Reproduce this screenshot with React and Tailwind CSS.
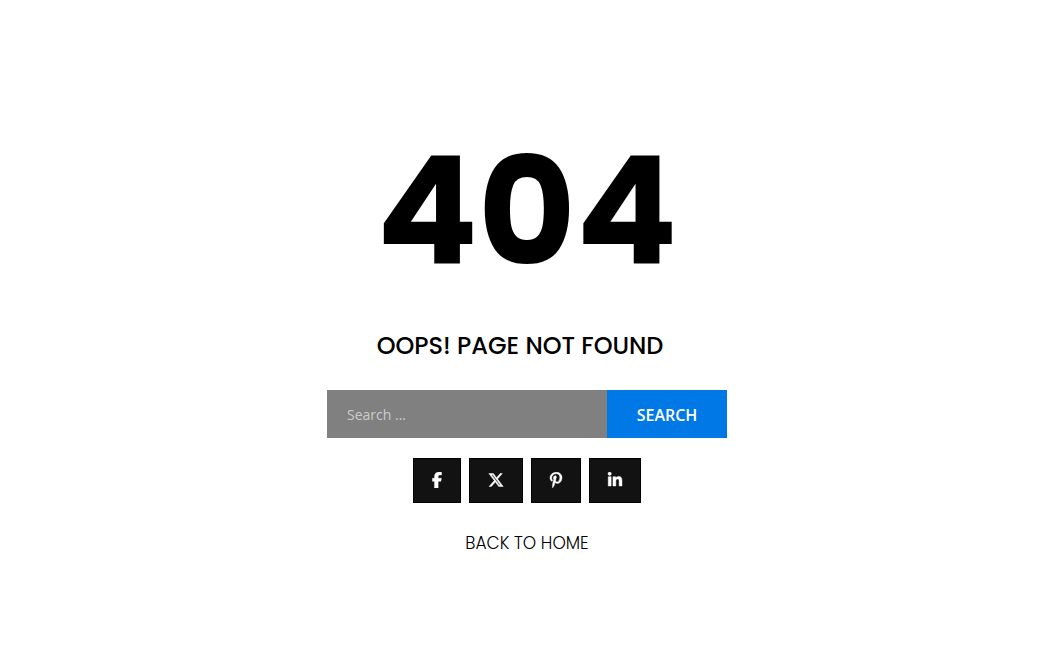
import React from 'react'
import { FaFacebookF, FaXTwitter, FaPinterestP, FaLinkedinIn } from 'react-icons/fa6'

const socials = [
    { label: 'Facebook', Icon: FaFacebookF, width: 'w-[48px]' },
    { label: 'X', Icon: FaXTwitter, width: 'w-[54px]' },
    { label: 'Pinterest', Icon: FaPinterestP, width: 'w-[50px]' },
    { label: 'LinkedIn', Icon: FaLinkedinIn, width: 'w-[52px]' },
]

export default function App() {
    return (
        <main className="flex min-h-screen flex-col items-center bg-white pt-[132px] pl-1.5 text-black font-['Poppins','Inter',sans-serif]">
            <h1 className="text-[150px] leading-[160px] font-bold">404</h1>
            <h2 className="mt-9 pr-3.5 text-2xl leading-9 font-medium uppercase">Oops! Page Not Found</h2>

            <form className="mt-6.5 flex h-12 w-full max-w-[400px] font-['Open_Sans',sans-serif]" onSubmit={(e) => e.preventDefault()}>
                <input
                    type="search"
                    aria-label="Search"
                    placeholder="Search ..."
                    className="min-w-0 flex-1 bg-[#808080] px-5 pt-0.5 text-sm text-white outline-none placeholder:text-[#cccccc]"
                />
                <button type="submit" className="w-[120px] bg-[#0079e7] pt-0.5 text-base font-semibold text-white uppercase">
                    Search
                </button>
            </form>

            <nav aria-label="Social links" className="mt-5 flex gap-2">
                {socials.map(({ label, Icon, width }) => (
                    <a
                        key={label}
                        href="#"
                        aria-label={label}
                        className={`flex h-[45px] items-center justify-center border border-black bg-[#121212] pb-0.5 text-white ${width}`}
                    >
                        <Icon size={16} stroke="currentColor" strokeWidth={14} />
                    </a>
                ))}
            </nav>

            <a href="/" className="mt-7 text-[17px] leading-6 font-light uppercase">Back to Home</a>
        </main>
    )
}
